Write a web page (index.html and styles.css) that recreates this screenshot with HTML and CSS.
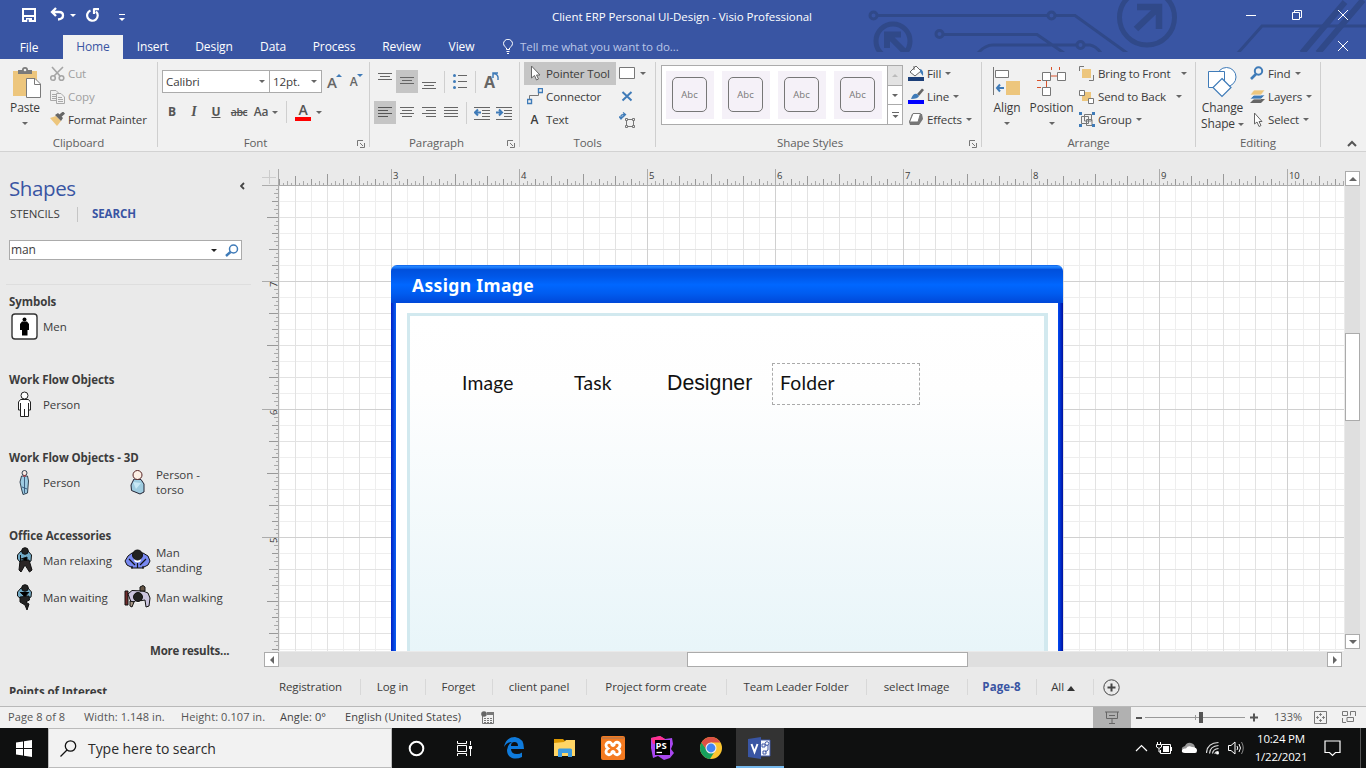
FILE: index.html
```html
<!DOCTYPE html>
<html lang="en">
<head>
<meta charset="utf-8">
<title>Client ERP Personal UI-Design - Visio Professional</title>
<link rel="stylesheet" href="styles.css">
</head>
<body>
<div class="app">
<header class="titlebar">
  <svg class="deco" width="500" height="52" viewBox="866 0 500 52" fill="none" stroke="#304989" stroke-width="3">
    <circle cx="873.5" cy="15.500" r="3.500"/><path d="M877 15.500H1048M1055 15.500H1075L1127 53M943 34.500H1037L1064 53M978 53Q985 45 993 45H1076M1084 45H1090Q1096 46 1101 53"/>
    <circle cx="1051.500" cy="15.500" r="3.500"/><circle cx="939.500" cy="34" r="3.500"/><circle cx="1080.500" cy="45" r="3.500"/>
    <circle cx="893" cy="41" r="17" stroke-width="5"/><path d="M887 48V34.500H901M888 35L904 51" stroke-width="6"/>
    <circle cx="1147" cy="17.500" r="27.500" stroke-width="5"/><path d="M1137 7H1159V29M1158 8L1136 29" stroke-width="6.500"/>
    <path d="M1238 53L1262 26H1366"/><path d="M1302 53L1345 2M1318 53L1363 0" stroke-width="6"/>
  </svg>
  <div class="title-row">
    <div class="qat">
      <svg class="q-save" width="14" height="14" fill="none" stroke="#fff" stroke-width="2"><path d="M1 1H13V13H1ZM1 8H13"/><path d="M4 10H10V14H4Z" fill="#fff" stroke="none"/><path d="M6 11.500V14" stroke="#3955a3" stroke-width="1.500"/></svg>
      <svg class="q-undo" width="15" height="14" fill="none" stroke="#fff" stroke-width="2.300"><path d="M6 1L2 5L6 9M2 5H9Q13 5 13 8.500T8 12.500"/></svg>
      <i class="arr light"></i>
      <svg class="q-redo" width="14" height="14" fill="none" stroke="#fff" stroke-width="2.200"><path d="M4.500 2.500A5.300 5.300 0 1 0 10 3.500M8 0.500V6M7.500 1.200H13"/></svg>
      <svg class="q-more" width="6" height="8"><path d="M0 .5H6" stroke="#fff"/><path d="M0 4H6L3 7Z" fill="#fff"/></svg>
    </div>
    <div class="title">Client ERP Personal UI-Design - Visio Professional</div>
    <div class="win">
      <svg width="47" height="34" stroke="#fff"><path d="M18 15.500H28"/></svg>
      <svg width="47" height="34" stroke="#fff" fill="none"><path d="M18.500 12.500H25.500V19.500H18.500ZM20.500 12V10.500H27.500V17.500H26"/></svg>
      <svg width="46" height="34" stroke="#fff"><path d="M18 10L28 20M28 10L18 20"/></svg>
    </div>
  </div>
  <nav class="tabs">
    <span class="file">File</span><span class="home">Home</span><span class="t-ins">Insert</span><span class="t-des">Design</span><span class="t-dat">Data</span><span class="t-pro">Process</span><span class="t-rev">Review</span><span class="t-vie">View</span>
    <svg class="bulb" width="10" height="15" fill="none" stroke="#fff"><path d="M3.500 10.500V9Q.5 7 .5 4.700A4.300 4.200 0 0 1 9.500 4.700Q9.500 7 6.500 9V10.500ZM3.500 12.500H6.500M4 14.500H6"/></svg>
    <span class="tell">Tell me what you want to do...</span>
    <svg class="docx" width="46" height="24" stroke="#fff"><path d="M18 6L28 16M28 6L18 16"/></svg>
  </nav>
</header>

<section class="ribbon">
  <div class="group g-clip">
    <div class="body">
      <div class="big paste"><svg width="30" height="31"><path d="M1 4H25V29H1Z" fill="#edc67d"/><path d="M6 7V3H10Q10 0 13 0T16 3H20V7Z" fill="#7a7a7a"/><circle cx="13" cy="3" r="1.300" fill="#f1f1f1"/><path d="M14.500 11.500H23L28.500 17V30.500H14.500Z" fill="#fff" stroke="#7a7a7a"/><path d="M22.500 11.500V17.500H28.500" fill="none" stroke="#7a7a7a"/></svg><b>Paste</b><i class="arr"></i></div>
      <div class="rows">
        <div class="row off"><svg width="15" height="16" fill="none" stroke="#a5a5a5" stroke-width="1.600"><path d="M2 1L10 10M13 1L4 10"/><circle cx="3" cy="12" r="2.300"/><circle cx="11.500" cy="12" r="2.300"/></svg><span>Cut</span></div>
        <div class="row off"><svg width="15" height="16" fill="#f1f1f1" stroke="#a9a9a9"><path d="M.5 1.500H6L8.500 4V11.500H.5ZM2 5.500H6M2 7.500H6M2 9.500H6"/><path d="M6.500 4.500H11L14.500 8V14.500H6.500ZM8 8.500H12M8 10.500H13M8 12.500H13"/></svg><span>Copy</span></div>
        <div class="row"><svg width="15" height="16"><path d="M0 6L6 4L11 9L7 14Z" fill="#edc67d"/><path d="M5 3L8 1L13 6L11 9Z" fill="#666"/><path d="M10 4L14 .5" stroke="#666" stroke-width="3"/></svg><span>Format Painter</span></div>
      </div>
    </div>
    <div class="label">Clipboard</div>
  </div>

  <div class="group g-font">
    <div class="body col">
      <div class="font1">
        <div class="combo c1"><span>Calibri</span><i class="arr"></i></div><div class="combo c2"><span>12pt.</span><i class="arr"></i></div>
        <span class="grow">A<svg width="6" height="4"><path d="M0 3L3 0L6 3Z" fill="#3f7bb8"/></svg></span><span class="shrink">A<svg width="6" height="4"><path d="M0 0H6L3 3Z" fill="#3f7bb8"/></svg></span>
      </div>
      <div class="font2"><span class="cell bold">B</span><span class="cell ital">I</span><span class="cell under">U</span><span class="cell strike">abc</span><span class="cell case">Aa</span><i class="arr"></i><i class="vsep"></i><span class="color">A</span><i class="arr"></i></div>
    </div>
    <div class="label shift">Font<svg class="launch" width="8" height="8" fill="none" stroke="#777"><path d="M.5 6V.5H6M3 3L6 6M7.500 3V7.500H3"/></svg></div>
  </div>

  <div class="group g-para">
    <div class="body col">
      <div class="prow p1">
        <span class="pc"><svg width="22" height="23" stroke="#666"><path d="M4 3.500H18M6 6.500H16M4 9.500H18"/></svg></span><span class="pc on"><svg width="22" height="23" stroke="#666"><path d="M4 7.500H18M6 10.500H16M4 13.500H18"/></svg></span><span class="pc"><svg width="22" height="23" stroke="#666"><path d="M4 12.500H18M6 15.500H16M4 18.500H18"/></svg></span><i class="vsep"></i>
        <svg class="bul" width="15" height="17"><path d="M5 2.500H14M5 8.500H14M5 14.500H14" stroke="#666"/><g fill="#3f7bb8"><circle cx="1.500" cy="2.500" r="1.500"/><circle cx="1.500" cy="8.500" r="1.500"/><circle cx="1.500" cy="14.500" r="1.500"/></g></svg><i class="vsep"></i>
        <span class="rotA">A<svg width="8" height="9" fill="none" stroke="#3f7bb8" stroke-width="1.500"><path d="M1 6V1H6M1.500 1.500Q7 2 6 8"/></svg></span>
      </div>
      <div class="prow p2">
        <span class="pc on"><svg width="22" height="23" stroke="#555"><path d="M4 6.500H18M4 9.500H14M4 12.500H18M4 15.500H14"/></svg></span><span class="pc"><svg width="22" height="23" stroke="#666"><path d="M4 6.500H18M6 9.500H16M4 12.500H18M6 15.500H16"/></svg></span><span class="pc"><svg width="22" height="23" stroke="#666"><path d="M4 6.500H18M8 9.500H18M4 12.500H18M8 15.500H18"/></svg></span><span class="pc"><svg width="22" height="23" stroke="#666"><path d="M4 6.500H18M4 9.500H18M4 12.500H18M4 15.500H18"/></svg></span><i class="vsep"></i>
        <svg class="ind" width="17" height="14"><path d="M0 1.500H16M8 4.500H16M8 7.500H16M8 10.500H16M0 13.500H16" stroke="#666"/><path d="M7 6.500H1M4 3.500L1 6.500L4 9.500" stroke="#3f7bb8" stroke-width="2" fill="none"/></svg><svg class="ind" width="17" height="14"><path d="M0 1.500H16M8 4.500H16M8 7.500H16M8 10.500H16M0 13.500H16" stroke="#666"/><path d="M0 6.500H6M3 3.500L6 6.500L3 9.500" stroke="#3f7bb8" stroke-width="2" fill="none"/></svg>
      </div>
    </div>
    <div class="label shift">Paragraph<svg class="launch" width="8" height="8" fill="none" stroke="#777"><path d="M.5 6V.5H6M3 3L6 6M7.500 3V7.500H3"/></svg></div>
  </div>

  <div class="group g-tools">
    <div class="body">
      <div class="rows tl">
        <div class="row on"><svg width="16" height="17"><path d="M4.500 1V13L7.500 10.500L9.500 15L11.500 14L9.500 10H13Z" fill="#fff" stroke="#666"/></svg><span>Pointer Tool</span></div>
        <div class="row"><svg width="16" height="17" fill="none"><path d="M2.500 11V7.500H11.500V5" stroke="#777"/><path d="M.5 11.500H4.500V15.500H.5ZM11.500 .5H15.500V4.500H11.500Z" stroke="#3f7bb8" stroke-width="1.400"/></svg><span>Connector</span></div>
        <div class="row"><b class="ta">A</b><span>Text</span></div>
      </div>
      <div class="rows tr">
        <div class="row"><svg width="17" height="13"><path d="M.5 .5H15.500V11.500H.5Z" fill="#fff" stroke="#777"/></svg><i class="arr"></i></div>
        <div class="row"><svg width="17" height="13"><path d="M3.500 2L12.500 10.500M12.500 2L3.500 10.500" stroke="#3f7bb8" stroke-width="2"/></svg></div>
        <div class="row"><svg width="17" height="16" fill="none"><path d="M2 7V4Q2 2.500 6 2.500M4 .5L6.500 2.500L4 5M0 4.500L2 7L4 4.500" stroke="#3f7bb8" stroke-width="1.300"/><path d="M7.500 7.500H14.500V14.500H7.500Z" stroke="#777"/><path d="M6.500 6.500h2v2h-2zM13.500 6.500h2v2h-2zM6.500 13.500h2v2h-2zM13.500 13.500h2v2h-2z" fill="#f1f1f1" stroke="#777"/></svg></div>
      </div>
    </div>
    <div class="label">Tools</div>
  </div>

  <div class="group g-style">
    <div class="body">
      <div class="gallery"><span class="th"><b>Abc</b></span><span class="th"><b>Abc</b></span><span class="th"><b>Abc</b></span><span class="th"><b>Abc</b></span>
        <div class="gs"><span class="dis"><i class="arr up"></i></span><span><i class="arr"></i></span><span><svg width="7" height="6"><path d="M0 .5H7" stroke="#666"/><path d="M.5 3H6.500L3.500 6Z" fill="#666"/></svg></span></div></div>
      <div class="rows sr">
        <div class="row"><svg width="16" height="17"><path d="M2 7L8 1L13 6L7 11Z" fill="#fff" stroke="#666"/><path d="M6 5V1" stroke="#666"/><path d="M12 4Q16 5 15 11L12 7Z" fill="#3f7bb8"/><path d="M0 12H16V16H0Z" fill="#1c3f78"/></svg><span>Fill</span><i class="arr"></i></div>
        <div class="row"><svg width="16" height="17"><path d="M9 6L14 .5L16 2L11 8Z" fill="#666"/><path d="M3 11Q5 5 9 6L11 8Q10 11 3 11Z" fill="#3f7bb8"/><path d="M0 12H16V16H0Z" fill="#00f"/></svg><span>Line</span><i class="arr"></i></div>
        <div class="row"><svg width="16" height="15"><path d="M1 10L4 2H14L15 7L11 13H2Z" fill="#777"/><path d="M1.500 10L5 1.500H12.500L10 10Z" fill="#fff" stroke="#777"/></svg><span>Effects</span><i class="arr"></i></div>
      </div>
    </div>
    <div class="label shift2">Shape Styles<svg class="launch" width="8" height="8" fill="none" stroke="#777"><path d="M.5 6V.5H6M3 3L6 6M7.500 3V7.500H3"/></svg></div>
  </div>

  <div class="group g-arr">
    <div class="body">
      <div class="big al"><svg width="28" height="30"><path d="M.5 0V28M2.500 3.500H15.500V10.500H2.500Z" fill="#fff" stroke="#777"/><path d="M13 14H27V28H13Z" fill="#edc67d"/><path d="M11 21H4M7 17.500L4 21L7 24.500" stroke="#3f7bb8" stroke-width="2" fill="none"/></svg><b>Align</b><i class="arr"></i></div>
      <div class="big po"><svg width="30" height="30"><path d="M14.500 0V3M22.500 0V3M14 9H20M9.500 14V20M0 13.500H4M0 20.500H4M9.500 13V20M27 9H29" stroke="#d9532c"/><path d="M5.500 5.500H13.500V13.500H5.500ZM20.500 5.500H28.500V13.500H20.500ZM5.500 20.500H13.500V28.500H5.500Z" fill="#fff" stroke="#777"/></svg><b>Position</b><i class="arr"></i></div>
      <div class="rows">
        <div class="row"><svg width="16" height="16" fill="none"><path d="M3 3H12V12H3Z" fill="#edc67d"/><path d="M5 .5H.5V5M10 14.500H14.500V9" stroke="#777"/></svg><span>Bring to Front</span><i class="arr"></i></div>
        <div class="row"><svg width="16" height="16"><path d="M3 3H12V12H3Z" fill="#edc67d"/><path d="M.5 1.500H5.500V6.500H.5ZM9.500 9.500H14.500V14.500H9.500Z" fill="#fff" stroke="#777"/></svg><span>Send to Back</span><i class="arr"></i></div>
        <div class="row"><svg width="16" height="16"><path d="M2.500 4.500H9.500V11.500H2.500ZM5.500 2.500H12.500V9H5.500ZM7.500 7.500H13V13.500H7.500Z" fill="none" stroke="#777"/><path d="M0 0h3v3h-3zM13 0h3v3h-3zM0 12h3v3h-3zM13 12h3v3h-3z" fill="#3f7bb8"/></svg><span>Group</span><i class="arr"></i></div>
      </div>
    </div>
    <div class="label">Arrange</div>
  </div>

  <div class="group g-edit">
    <div class="body">
      <div class="big ch"><svg width="31" height="31" fill="#fff" stroke="#3f7bb8"><circle cx="19.500" cy="10" r="9.500"/><path d="M1.500 4.500H17.500V20.500H1.500Z"/><path d="M15 11.500L24 20.500L15 29.500L6 20.500Z" stroke-width="1.200"/></svg><b>Change</b><b>Shape <i class="arr"></i></b></div>
      <div class="rows">
        <div class="row"><svg width="15" height="15" fill="none" stroke="#3f7bb8" stroke-width="2"><circle cx="8.500" cy="5" r="3.700"/><path d="M6 8L1 13" stroke-width="2.600"/></svg><span>Find</span><i class="arr"></i></div>
        <div class="row"><svg width="15" height="15"><path d="M4 10H15L11 14H0Z" fill="#666"/><path d="M4 6H15L11 10H0Z" fill="#3f7bb8" stroke="#f1f1f1" stroke-width=".7"/><path d="M4 1H15L11 6H0Z" fill="#edc67d" stroke="#f1f1f1" stroke-width=".7"/></svg><span>Layers</span><i class="arr"></i></div>
        <div class="row"><svg width="15" height="16"><path d="M4.500 1V12L7 10L9 14.500L11 13.500L9 9.500H12Z" fill="#fff" stroke="#666"/></svg><span>Select</span><i class="arr"></i></div>
      </div>
    </div>
    <div class="label">Editing</div>
  </div>
  <div class="collapse"><svg width="10" height="7" fill="none" stroke="#555" stroke-width="2"><path d="M1 6L5 2L9 6"/></svg></div>
</section>

<main class="work">
  <aside class="shapes">
    <div class="sh-head"><h1>Shapes</h1><svg width="5" height="8" fill="none" stroke="#444" stroke-width="1.800"><path d="M4 1L1 4L4 7"/></svg></div>
    <div class="sh-tabs"><span>STENCILS</span><i></i><b>SEARCH</b></div>
    <div class="search"><span>man</span><i class="arr dark"></i><svg width="14" height="13" fill="none" stroke="#3f7bb8" stroke-width="1.500"><circle cx="8.500" cy="5" r="4"/><path d="M5.500 8L1 12" stroke-width="2.400"/></svg></div>
    <div class="results">
      <h2>Symbols</h2>
      <div class="items"><div class="it"><svg width="27" height="27"><rect x="1" y="1" width="25" height="25" rx="3" fill="#fff" stroke="#333" stroke-width="1.400"/><circle cx="13.500" cy="6.500" r="2" /><path d="M11 8.500H16L18 11V17H16.500V22.500H11V17H9V11Z"/></svg><span>Men</span></div></div>
      <h2>Work Flow Objects</h2>
      <div class="items"><div class="it"><svg width="27" height="27" fill="#fff" stroke="#222"><path d="M9.500 8.500H17.500L19.500 11V19H17.500V25.500H9.500V19H7.500V11Z"/><path d="M13.500 18V26M9.500 12V19M17.500 12V19"/><circle cx="13.500" cy="4.500" r="3.500"/></svg><span>Person</span></div></div>
      <h2>Work Flow Objects - 3D</h2>
      <div class="items"><div class="it"><svg width="27" height="27" stroke="#234" stroke-width=".9"><path d="M10.500 7H16.500L17.500 12L16.500 24L12 25.500L10.500 20L9 13Z" fill="#9dcbe2"/><path d="M13.500 8V24M11 18L16 20" stroke="#357"/><circle cx="13.500" cy="4" r="2.500" fill="#fbe9e2"/><path d="M12 7H15" stroke="#c22"/></svg><span>Person</span></div><div class="it"><svg width="27" height="27" stroke="#223"><path d="M10 10L17 10.500L20 15L20 23L16 25L7.500 21.500L7 16Z" fill="#9fcce0"/><path d="M9 13L12 20L17 14" fill="#c8e8f5" stroke="none"/><circle cx="13.500" cy="6" r="4.500" fill="#fdf0e6" stroke="#522"/></svg><span>Person -<br>torso</span></div></div>
      <h2>Office Accessories</h2>
      <div class="items"><div class="it"><svg width="27" height="27" stroke="#111"><path d="M10 4L17 4L20.500 8L20 14L18 15H9L6.500 12V8Z" fill="#71aac6"/><path d="M9 14L18 13L21 23L18.500 25L14 18L10 25L8 23Z" fill="#2b2525"/><path d="M9.500 8V14M10 12L16 10V14"/><circle cx="14" cy="4" r="3.300" fill="#222"/></svg><span>Man relaxing</span></div><div class="it"><svg width="27" height="27" stroke="#111"><path d="M8 6L19 6L24 9L26 14L24 18L18 21L9 21L3 18L1 14L4 9Z" fill="#7788f0"/><path d="M5 12L11 18M22 12L16 18M13.500 16V21M8 22V19M19 22V19" stroke-width="1.200"/><circle cx="13.500" cy="12" r="3.500" fill="#fff" stroke="none"/><circle cx="13.500" cy="8" r="5" fill="#222"/></svg><span>Man<br>standing</span></div>
      <div class="it"><svg width="27" height="27" stroke="#111"><path d="M10 4L17 4L20.500 8L20 13L18 14H9L6.500 12V8Z" fill="#71aac6"/><path d="M9 13L18 12L18.500 16L14.500 18L18 20L16 26L14 21L9 18Z" fill="#222"/><path d="M9 8L14 13L18 8"/><circle cx="14" cy="4" r="3.300" fill="#222"/></svg><span>Man waiting</span></div><div class="it"><svg width="27" height="27" stroke="#111"><path d="M1 7H4V21H1Z" fill="#712b2b"/><path d="M4 10L8 6.500L19 7L24 9L26 14L25 22L22 23L21 16L15 17L7 18Z" fill="#cbc5df"/><path d="M16 3L19 1.500L21 3V7H16Z" fill="#654"/><path d="M6 17L10 18L8 23L6 22Z" fill="#a98"/><circle cx="14" cy="16" r="3" fill="#fff" stroke="none"/><circle cx="14" cy="13" r="4.500" fill="#222"/></svg><span>Man walking</span></div></div>
      <div class="more">More results...</div>
      <h2>Points of Interest</h2>
    </div>
  </aside>

  <section class="editor">
    <div class="rulers"><div class="corner"><svg width="15" height="15" stroke="#ccc"><path d="M0 8.500H14M7.500 1V15"/></svg></div><div class="hruler"><span>3</span><span>4</span><span>5</span><span>6</span><span>7</span><span>8</span><span>9</span><span>10</span></div></div>
    <div class="mid">
      <div class="vruler"><span>7</span><span>6</span><span>5</span></div>
      <div class="canvas">
        <div class="xp"><div class="xp-title">Assign Image</div><div class="xp-body"><div class="xp-panel"></div></div></div>
        <span class="tx t-image">Image</span><span class="tx t-task">Task</span><span class="tx t-designer">Designer</span><span class="tx t-folder">Folder</span>
      </div>
    </div>
    <div class="hscroll"><span class="sb"><i class="lt"></i></span><div class="htrack"><div class="hthumb"></div></div><span class="sb"><i class="rt"></i></span></div>
    <div class="pages"><span class="a1">Registration</span><span class="a2">Log in</span><span class="a3">Forget</span><span class="a4">client panel</span><span class="a5">Project form create</span><span class="a6">Team Leader Folder</span><span class="a7">select Image</span><span class="a8">Page-8</span><span class="a9">All <svg width="8" height="5"><path d="M0 5L4 0L8 5Z" fill="#333"/></svg></span><svg class="add" width="17" height="17" fill="none" stroke="#444"><circle cx="8.500" cy="8.500" r="7.700"/><path d="M4.500 8.500H12.500M8.500 4.500V12.500" stroke-width="2"/></svg></div>
  </section>
  <div class="vscroll"><span class="sb"><i class="upa"></i></span><div class="vtrack"><div class="vthumb"></div></div><span class="sb"><i class="dna"></i></span></div>
</main>

<footer class="status">
  <span class="s1">Page 8 of 8</span><span class="s2">Width: 1.148 in.</span><span class="s3">Height: 0.107 in.</span><span class="s4">Angle: 0°</span><span class="s5">English (United States)</span>
  <svg class="s6" width="14" height="14"><path d="M1.500 5V12.500H12.500V2.500H6" fill="none" stroke="#777"/><path d="M6 1H13V4H6Z" fill="#777"/><circle cx="3" cy="3" r="2.800" fill="#666"/><path d="M3 7.500H11M3 9.500H11M3 11.500H11" stroke="#777" stroke-dasharray="2 1"/></svg>
  <div class="present"><svg width="14" height="14" fill="none" stroke="#666"><path d="M0 1H14M1.500 1V7.500H12.500V1M4 4.500H10M7 8V12.500M4 12.500H10"/></svg></div>
  <svg class="zoom" width="116" height="20"><path d="M0 10H6" stroke="#555" stroke-width="2"/><path d="M9 9.500H109M59.500 7V12" stroke="#999"/><path d="M63 4H67V15H63Z" fill="#555"/></svg><svg class="plus" width="9" height="9" stroke="#555" stroke-width="2"><path d="M0 4.500H8M4 .5V8.500"/></svg>
  <span class="pct">133%</span>
  <svg class="fit" width="14" height="14" fill="none" stroke="#777"><path d="M.5 .5H12.500V12.500H.5Z"/><path d="M6.500 2V5M6.500 8V11M2 6.500H5M8 6.500H11M5 3.500H8M5 9.500H8M3.500 5V8M9.500 5V8" stroke-width=".9"/></svg>
  <svg class="sw" width="15" height="13" fill="none" stroke="#777"><path d="M.5 .5H5.500V4.500H.5ZM8.500 4.500V.5H13.500V5M5 6.500H11.500V10.500H5ZM.5 7V11.500H4"/></svg>
</footer>

<footer class="taskbar">
  <div class="start"><svg width="17" height="17" fill="#fff"><path d="M0 2.500L7 1.500V8H0ZM8 1.300L16 0V8H8ZM0 9H7V15.500L0 14.500ZM8 9H16V17L8 15.700Z"/></svg></div>
  <div class="tsearch"><svg width="17" height="17" fill="none" stroke="#111" stroke-width="1.300"><circle cx="10.500" cy="6" r="5.200"/><path d="M7 10L.5 16.500"/></svg><span>Type here to search</span></div>
  <div class="tk"><svg width="17" height="17" fill="none" stroke="#fff" stroke-width="2"><circle cx="8.500" cy="8.500" r="6.800"/></svg></div>
  <div class="tk"><svg width="17" height="17" fill="none" stroke="#fff"><path d="M1.500 1V3.500H10.500V1M1.500 5.500H10.500V11.500H1.500ZM1.500 16V13.500H10.500V16M14.500 1V5M14.500 9V16"/><path d="M13 6h3v3h-3z" fill="#fff" stroke="none"/></svg></div>
  <div class="tk w51"><svg width="21" height="22"><path d="M0 10Q2 0 11 0Q20 1 20 12H7Q7 17 13 17Q16 17 18 15.500V20Q14 22 10 21.500Q3 20 3 13Q3 8 8 5Q3 5 0 10ZM7 9H14Q14 5 10.500 5T7 9Z" fill="#0f7bdc" fill-rule="evenodd"/></svg></div>
  <div class="tk w47"><svg width="22" height="20"><path d="M0 1H9L11 3V6H0Z" fill="#dc9700"/><path d="M0 5L10 4L12 2H21V18H0Z" fill="#ffd565"/><path d="M4 19V12Q4 10.500 5.500 10.500H16.500Q18 10.500 18 12V19H14V15H8V19Z" fill="#3d9be0"/></svg></div>
  <div class="tk w50"><svg width="24" height="24"><rect width="24" height="24" rx="2" fill="#f47a20"/><path d="M1 1H23V3H1Z" fill="#c9793e"/><path d="M5 9.500A3 3 0 0 1 11 9Q12 10 13 9A3 3 0 0 1 19 9.500Q19 11 17 12.500Q19 14 19 15.500A3 3 0 0 1 13 16Q12 15 11 16A3 3 0 0 1 5 15.500Q5 14 7 12.500Q5 11 5 9.500Z" fill="none" stroke="#fff" stroke-width="2.800"/></svg></div>
  <div class="tk"><svg width="25" height="24"><path d="M1 2L10 0L15 3L22 2L23 8L21 13L24 17L20 22L14 24L8 20L3 22L1 12Z" fill="#a947f0"/><path d="M1 2L10 0L15 3L12 7L3 8Z" fill="#ff318c"/><path d="M5 4H20V19H5Z" fill="#000"/><text x="5.500" y="13" font-size="9.500" font-weight="700" fill="#fff">PS</text><path d="M6.500 16.500H12" stroke="#fff" stroke-width="1.300"/></svg></div>
  <div class="tk w50"><svg width="22" height="22"><circle cx="11" cy="11" r="11" fill="#fbc52f"/><path d="M1.500 5.500A11 11 0 0 0 10 22L15 14L7 13Z" fill="#16a15d"/><path d="M1.500 5.500A11 11 0 0 1 20.500 5.500H11L6 12Z" fill="#dc5045"/><circle cx="11" cy="11" r="5.500" fill="#eee"/><circle cx="11" cy="11" r="4.400" fill="#4285f4"/></svg></div>
  <div class="tk active"><svg width="24" height="22"><path d="M11 3H22V19H11Z" fill="#f7f8fc" stroke="#3f57a5"/><path d="M14 7h3v3h-3zM15 14h3v3h-3zM17 8H20V13L17 15" fill="none" stroke="#3f57a5"/><circle cx="19" cy="6.500" r="1.800" fill="#fff" stroke="#3f57a5"/><path d="M0 2L13 0V22L0 20Z" fill="#3955a3"/><path d="M3.500 7L6.500 15L9.500 7" stroke="#fff" stroke-width="2" fill="none"/></svg></div>
  <div class="tray">
    <svg width="13" height="8" fill="none" stroke="#fff" stroke-width="1.200"><path d="M1 7L6.500 1.500L12 7"/></svg>
    <svg width="17" height="14" fill="none" stroke="#fff"><path d="M6 3.500H14.500V12.500H4.500V9M15.500 6V10M1.500 1V3M4.500 1V3M.5 3.500H5.500V6L3 7.500L.5 6ZM3 8V11H5"/><path d="M7 5H13V11H7Z" fill="#fff" stroke="none"/></svg>
    <svg width="17" height="12"><path d="M1 8Q0 5 4 4Q6 0 10 1Q14 2 14 6Z" fill="#999"/><path d="M4 11Q0 11 1 8Q2 6 5 6.500Q7 3 11 5Q16 5 16 8.500Q16 11 14 11Z" fill="#fff"/></svg>
    <svg width="14" height="14" fill="none" stroke="#ddd"><path d="M.5 12Q1 2 12.500 1.500M3.500 12.500Q4 5 12.500 4.500M6.500 12.500Q7 8 12.500 7.500M9 13Q9 10.500 12.500 10.500" stroke-width="1.200"/><circle cx="11.500" cy="12" r="1.500" fill="#fff" stroke="none"/></svg>
    <svg width="17" height="14" fill="none" stroke="#fff"><path d="M.5 4.500H3L7 1V13L3 9.500H.5ZM9 5Q10.500 7 9 9M11 3Q14 7 11 11"/><path d="M13.500 1Q17 7 13.500 13" stroke="#888"/></svg>
  </div>
  <div class="clock"><span>10:24 PM</span><span>1/22/2021</span></div>
  <svg class="action" width="17" height="17" fill="none" stroke="#fff" stroke-width="1.200"><path d="M1 1H16V12.500H11.500L8.500 15.500L5.500 12.500H1Z"/></svg>
  <i class="desk"></i>
</footer>
</div>
</body>
</html>
```
FILE: styles.css
```css
* { box-sizing: border-box; }
body { margin: 0; background: #eaeaea; color: #3c3c3c; font: 11.5px/16px "Open Sans", "Noto Sans", sans-serif; letter-spacing: -.1px; }
svg { display: block; flex: none; }
b { font-weight: 400; }
.app { width: 1366px; height: 768px; display: flex; flex-direction: column; overflow: hidden; white-space: nowrap; }
.arr { width: 0; height: 0; flex: none; border: 3px solid transparent; border-top: 3px solid #666; border-bottom: 0; }
.arr.light { border-top-color: #fff; }
.arr.dark { border-top-color: #222; }
.vsep { width: 1px; height: 22px; background: #cfcfcf; flex: none; }

/* title bar */
.titlebar { height: 59px; background: #3955a3; position: relative; color: #fff; flex: none; }
.deco { position: absolute; right: 0; top: 0; }
.title-row { display: flex; height: 35px; position: relative; }
.qat { width: 400px; display: flex; align-items: flex-start; padding-left: 22px; }
.q-save { margin-top: 8px; }
.q-undo { margin: 7px 0 0 14px; }
.qat .arr { margin: 14px 0 0 5px; }
.q-redo { margin: 8px 0 0 10px; }
.q-more { margin: 14px 0 0 19px; }
.title { width: 564px; text-align: center; line-height: 34px; letter-spacing: -.05px; }
.win { display: flex; margin-left: auto; }
.win svg { width: 46px; }
.tabs { display: flex; height: 24px; line-height: 24px; position: relative; font-size: 12px; text-align: center; }
.tabs span { flex: none; }
.file { width: 58px; padding-top: 1px; margin-right: 5px; }
.home { width: 60px; background: #f1f1f1; color: #3955a3; }
.t-ins { width: 59px; } .t-des { width: 64px; } .t-dat { width: 54px; } .t-pro { width: 68px; } .t-rev { width: 67px; } .t-vie { width: 53px; }
.bulb { margin: 4px 0 0 15px; }
.tell { color: #b9c5e6; margin-left: 7px; font-size: 11.600px; }
.docx { margin-left: auto; }

/* ribbon */
.ribbon { height: 93px; background: #f1f1f1; border-bottom: 1px solid #d2d2d2; display: flex; padding-top: 3px; flex: none; }
.group { flex: none; height: 85px; display: flex; flex-direction: column; border-right: 1px solid #cfcfcf; }
.g-clip { width: 158px; } .g-font { width: 212px; } .g-para { width: 150px; } .g-tools { width: 136px; } .g-style { width: 326px; } .g-arr { width: 214px; } .g-edit { width: 125px; }
.body { height: 69px; display: flex; flex: none; }
.body.col { flex-direction: column; }
.label { line-height: 24px; height: 16px; text-align: center; color: #606060; display: flex; justify-content: center; position: relative; }
.shift { padding-right: 16px; }
.shift2 { padding-right: 17px; }
.launch { position: absolute; right: 4px; top: 9px; }
.rows { display: flex; flex-direction: column; }
.row { height: 23px; display: flex; align-items: center; }
.row span { margin-left: 3px; font-size: 11.600px; letter-spacing: -.15px; }
.row .arr { margin-left: 4px; }
.off { color: #a0a0a0; }
.big { display: flex; flex-direction: column; align-items: center; flex: none; font-size: 12px; line-height: 16px; letter-spacing: -.15px; }
.big svg { margin-top: 5px; height: 31px; }
.big b { margin-top: 2px; }
.big > .arr { margin-top: 6px; }
.paste { width: 50px; }
.paste svg { margin-left: 3px; }
.combo { height: 23px; border: 1px solid #ababab; background: #fff; display: flex; align-items: center; justify-content: space-between; padding: 0 4px 0 3px; font-size: 11.600px; }
.c1 { width: 108px; } .c2 { width: 52px; border-left: 0; }
.font1 { display: flex; padding: 8px 0 0 4px; }
.grow, .shrink { display: flex; font: 15px/24px "Open Sans", sans-serif; margin-left: 5px; font-weight: 600; color: #666; }
.grow svg, .shrink svg { margin: 4px 0 0 -1px; }
.shrink { font-size: 12px; margin-left: 8px; }
.font2 { display: flex; align-items: center; height: 22px; margin-top: 7px; padding-left: 3px; font-size: 12px; color: #555; }
.cell { width: 22px; text-align: center; }
.bold { font-weight: 700; }
.ital { font-family: "Liberation Serif", serif; font-style: italic; font-weight: 700; font-size: 14px; }
.under { text-decoration: underline; font-weight: 700; }
.strike { text-decoration: line-through; font-size: 10.500px; letter-spacing: -.5px; width: 24px; font-weight: 600; }
.case { width: 20px; font-weight: 600; font-size: 12px; }
.font2 .arr { margin-left: 1px; }
.font2 .vsep { margin: 0 8px 0 8px; }
.color { width: 16px; text-align: center; border-bottom: 4px solid #f00; line-height: 14px; font-size: 14px; font-weight: 600; }
.color + .arr { margin-left: 5px; }
.prow { display: flex; align-items: center; padding-left: 4px; height: 23px; }
.p1 { margin-top: 8px; } .p2 { margin-top: 8px; }
.pc { width: 22px; height: 23px; }
.on { background: #c5c5c5; }
.p1 .vsep { margin: 0 8px 0 4px; }
.bul { margin-right: 3px; }
.rotA { display: flex; font: 700 16px/26px "Open Sans", sans-serif; color: #666; }
.rotA svg { margin-left: -3px; margin-top: 3px; }
.p2 .vsep { margin: 0 7px 0 4px; }
.ind { margin-right: 5px; }
.tl { width: 92px; margin-left: 4px; }
.tl .row { padding-left: 3px; }
.ta { width: 15px; margin-right: 1px; text-align: center; font-weight: 600; font-size: 12px; }
.tr { padding-left: 3px; }
.gallery { display: flex; width: 242px; height: 60px; border: 1px solid #ababab; background: #fff; margin: 3px 0 0 5px; padding-left: 4px; flex: none; }
.th { width: 48px; height: 48px; background: #f5f1f8; margin: 5px 8px 0 0; padding: 6px; flex: none; }
.th:nth-of-type(4) { margin-right: 0; }
.th b { display: block; width: 35px; height: 35px; border: 1px solid #777; border-radius: 5px; font-size: 9.500px; line-height: 34px; text-align: center; color: #777; letter-spacing: 0; }
.gs { width: 15px; border-left: 1px solid #ababab; display: flex; flex-direction: column; margin-left: auto; flex: none; }
.gs span { flex: 1; display: flex; align-items: center; justify-content: center; border-bottom: 1px solid #ababab; }
.gs span:last-child { border-bottom: 0; }
.dis { background: #e3e3e3; }
.arr.up { border-top: 0; border-bottom: 3px solid #bbb; }
.sr { margin-left: 5px; }
.al { width: 50px; } .po { width: 39px; }
.g-arr .rows { margin-left: 8px; }
.g-arr .row:nth-child(-n+2) .arr { margin-left: 10px; }
.ch { width: 53px; }
.ch b + b { margin-top: 0; display: flex; align-items: center; gap: 3px; }
.g-edit .rows { margin-left: 1px; }
.collapse { padding: 78px 0 0 26px; }

/* shapes pane */
.work { display: flex; height: 554px; flex: none; }
.shapes { width: 262px; height: 542px; overflow: hidden; padding-left: 9px; flex: none; }
.sh-head { display: flex; justify-content: space-between; padding: 22px 17px 0 0; height: 53px; }
.sh-head svg { margin-top: 8px; }
h1 { margin: 0; font-size: 20.500px; line-height: 29px; font-weight: 400; color: #3955a3; letter-spacing: -.4px; }
.sh-tabs { display: flex; padding-left: 1px; height: 18px; align-items: center; letter-spacing: -.1px; }
.sh-tabs span { width: 67px; }
.sh-tabs i { width: 1px; height: 15px; background: #c5c5c5; margin-right: 14px; }
.sh-tabs b { font-weight: 700; color: #3955a3; }
.search { width: 233px; height: 20px; margin-top: 17px; border: 1px solid #ababab; background: #fff; display: flex; align-items: center; padding: 0 2px 0 1px; font-size: 12px; }
.search .arr { margin-left: auto; margin-right: 8px; }
.results { margin-top: 24px; border-top: 1px solid #dedede; width: 245px; margin-left: -3px; padding: 9px 0 0 3px; }
h2 { margin: 0; font-size: 11.500px; line-height: 16px; font-weight: 700; color: #3c3c3c; letter-spacing: -.08px; }
.items { display: grid; grid-template-columns: 113px 120px; margin: 1px 0 24px 2px; }
.it { display: flex; align-items: center; height: 37px; padding-bottom: 7px; line-height: 15px; letter-spacing: -.05px; }
.it svg { margin-right: 5px; }
.more { font-weight: 700; margin: 8px 0 25px 141px; line-height: 16px; letter-spacing: -.2px; }

/* drawing area */
.editor { width: 1082px; flex: none; }
.rulers { display: flex; height: 34px; padding-top: 17px; }
.corner { width: 17px; border-right: 1px solid #ababab; border-bottom: 1px solid #ababab; }
.hruler { width: 1065px; display: flex; padding-left: 114px; overflow: hidden; border-bottom: 1px solid #ababab; font-size: 9.500px; line-height: 14px;
  background: linear-gradient(90deg,#ababab 1px,transparent 1px) 112px 100%/128px 17px repeat-x,
  linear-gradient(90deg,#999 1px,transparent 1px) 48px 100%/64px 11px repeat-x,
  linear-gradient(90deg,#999 1px,transparent 1px) 16px 100%/32px 9px repeat-x,
  linear-gradient(90deg,#999 1px,transparent 1px) 0 100%/16px 6px repeat-x,
  linear-gradient(90deg,#aaa 1px,transparent 1px) 0 100%/8px 4px repeat-x,
  linear-gradient(90deg,#aaa 1px,transparent 1px) 0 100%/4px 2px repeat-x; }
.hruler span { width: 128px; flex: none; }
.mid { display: flex; height: 465px; }
.vruler { width: 17px; border-right: 1px solid #ababab; padding-top: 94px; font-size: 9.500px; line-height: 9px; overflow: hidden;
  background: linear-gradient(#ababab 1px,transparent 1px) 100% 95px/17px 128px repeat-y,
  linear-gradient(#999 1px,transparent 1px) 100% 31px/11px 64px repeat-y,
  linear-gradient(#999 1px,transparent 1px) 100% 31px/9px 32px repeat-y,
  linear-gradient(#999 1px,transparent 1px) 100% 15px/6px 16px repeat-y,
  linear-gradient(#aaa 1px,transparent 1px) 100% 7px/4px 8px repeat-y,
  linear-gradient(#aaa 1px,transparent 1px) 100% 3px/2px 4px repeat-y; }
.vruler span { display: block; height: 128px; writing-mode: vertical-rl; transform: rotate(180deg); text-align: right; padding: 2px 7px; width: 17px; }
.canvas { width: 1065px; height: 465px; position: relative; overflow: hidden; background: 
  linear-gradient(90deg,#d0d0d0 1px,transparent 1px) 112px 0/128px 100%,
  linear-gradient(#d0d0d0 1px,transparent 1px) 0 95px/100% 128px,
  linear-gradient(90deg,#e2e2e2 1px,transparent 1px) 16px 0/32px 100%,
  linear-gradient(#e2e2e2 1px,transparent 1px) 0 31px/100% 32px,
  linear-gradient(90deg,#eeeeee 1px,transparent 1px) 0 0/16px 100%,
  linear-gradient(#eeeeee 1px,transparent 1px) 0 15px/100% 16px, #fff; }
.xp { position: absolute; left: 112px; top: 79px; width: 672px; height: 400px; }
.xp-title { height: 38px; border-radius: 6px 6px 0 0; padding-left: 21px; color: #fff; font: 700 17.500px/41px "Noto Sans", sans-serif; letter-spacing: .35px; background: linear-gradient(#0a5fe8 0,#2585ff 4%,#1673f5 8%,#0050dc 12%,#0057e8 30%,#0067ff 52%,#005cf0 75%,#0048d8 100%); }
.xp-body { height: 362px; padding: 10px 10px 0 11px; border: solid; border-width: 0 5px; border-image: linear-gradient(90deg,#0020c4 0,#0a5cf0 .7%,#0048f0 99.300%,#0010a0 100%) 0 5; background: #fff; }
.xp-panel { height: 500px; border: 3px solid #d2e9ef; border-right-width: 4px; background: linear-gradient(#fff 0,#fefefe 15%,#e8f5f9 68%,#e8f5f9 100%); }
.tx { position: absolute; color: #111; font: 19.300px/24px Lato, sans-serif; letter-spacing: .2px; }
.t-image { left: 183px; top: 185px; } .t-task { left: 295px; top: 185px; }
.t-designer { left: 388px; top: 185px; font: 21.300px/24px "Liberation Sans", sans-serif; letter-spacing: 0; }
.t-folder { left: 493px; top: 177px; width: 148px; height: 42px; border: 1px dashed #aaa; line-height: 38px; padding-left: 7px; }
.sb { width: 15px; height: 15px; background: #fff; border: 1px solid #ababab; display: flex; align-items: center; justify-content: center; flex: none; }
.lt { border: 4px solid transparent; border-left: 0; border-right-color: #666; }
.rt { border: 4px solid transparent; border-right: 0; border-left-color: #666; }
.upa { border: 4px solid transparent; border-top: 0; border-bottom-color: #666; }
.dna { border: 4px solid transparent; border-bottom: 0; border-top-color: #666; }
.hscroll { display: flex; padding: 1px 0 0 2px; height: 16px; }
.htrack { width: 1048px; height: 15px; background: #dfdfdf; }
.hthumb { width: 281px; height: 15px; margin-left: 408px; background: #fff; border: 1px solid #ababab; }
.vscroll { width: 17px; padding: 19px 0 0 1px; flex: none; }
.vtrack { width: 15px; height: 448px; background: #dfdfdf; padding-top: 147px; }
.vthumb { height: 88px; background: #fff; border: 1px solid #ababab; }
.pages { display: flex; align-items: center; margin-top: 9px; height: 22px; }
.pages span { text-align: center; height: 16px; line-height: 16px; border-right: 1px solid #d8d8d8; padding-right: 1px; }
.a1 { width: 99px; } .a2 { width: 65px; } .a3 { width: 67px; } .a4 { width: 94px; } .a5 { width: 140px; } .a6 { width: 140px; } .a7 { width: 101px; } .a8 { width: 69px; font-weight: 700; color: #3955a3; letter-spacing: .1px; } .a9 { width: 57px; }
.pages .a9 { padding-right: 4px; }
.a9 svg { display: inline-block; vertical-align: 0; }
.add { margin-left: 9px; }

/* status bar */
.status { height: 22px; background: #f1f1f1; border-top: 1px solid #b9b9b9; display: flex; align-items: center; padding-left: 8px; font-size: 11px; line-height: 18px; color: #555; flex: none; }
.status span { letter-spacing: .08px; padding-bottom: 2px; }
.s1 { width: 76px; } .s2 { width: 97px; } .s3 { width: 99px; } .s4 { width: 65px; } .s5 { width: 136px; }
.status .s4, .status .s5 { color: #444; padding-bottom: 1px; }
.present { width: 38px; height: 21px; margin-left: 598px; background: #b1b1b1; display: flex; align-items: center; justify-content: center; }
.zoom { margin-left: 5px; width: 112px; }
.plus { margin-left: 2px; }
.pct { width: 40px; margin-left: 15px; }
.sw { margin-left: 14px; }

/* taskbar */
.taskbar { height: 40px; background: #0f1010; display: flex; align-items: center; flex: none; color: #fff; }
.start { width: 48px; padding-left: 16px; }
.tsearch { width: 344px; height: 40px; background: #f2f2f2; border: 1px solid #bbb; display: flex; align-items: center; padding-left: 11px; color: #2b2b2b; font-size: 14px; }
.tsearch span { margin-left: 11px; padding-top: 1px; letter-spacing: -.05px; }
.tk { width: 48px; height: 40px; display: flex; align-items: center; justify-content: center; flex: none; letter-spacing: 0; }
.w51 { width: 53px; } .w47 { width: 47px; } .w50 { width: 50px; }
.active { background: #333; border-bottom: 2px solid #76b9ed; padding-top: 2px; }
.tray { display: flex; align-items: center; gap: 8px; margin-left: 351px; }
.clock { width: 62px; display: flex; flex-direction: column; text-align: center; line-height: 18px; margin-left: 5px; letter-spacing: -.2px; font-size: 11.500px; }
.action { margin-left: 12px; margin-right: 19px; }
.desk { width: 1px; height: 40px; background: #555; }
```
